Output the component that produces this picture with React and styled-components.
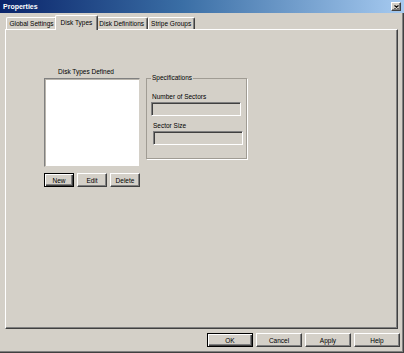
import React from 'react';
import styled, { createGlobalStyle } from 'styled-components';

const GlobalStyle = createGlobalStyle`
  html, body {
    margin: 0;
    padding: 0;
    background: #d4d0c8;
  }

  body {
    font-family: "Liberation Sans", Arial, sans-serif;
    font-size: 6.5px;
    color: #000;
  }
`;

const Window = styled.div`
  width: 404px;
  height: 353px;
  display: flex;
  flex-direction: column;
  background: #d4d0c8;
  overflow: hidden;
`;

const TitleBar = styled.div`
  flex: none;
  height: 13px;
  display: flex;
  align-items: center;
  justify-content: space-between;
  padding: 0 3px 0 3px;
  background: linear-gradient(to right, #0a246a 0%, #3a6ea5 45%, #a6caf0 100%);
  color: #fff;
  font-weight: bold;
  font-size: 7px;
`;

const CloseButton = styled.div`
  width: 10px;
  height: 9px;
  box-sizing: border-box;
  display: flex;
  align-items: center;
  justify-content: center;
  background: #d4d0c8;
  border: 1px solid;
  border-color: #fff #404040 #404040 #fff;
  box-shadow: inset -1px -1px #808080;

  svg {
    width: 5px;
    height: 4px;
  }
`;

const Body = styled.div`
  flex: 1;
  display: flex;
  flex-direction: column;
  padding: 2px 3px 5px 5px;
  border-right: 1px solid #404040;
  border-bottom: 1px solid #404040;
  box-shadow: inset -1px -1px #808080;
`;

const TabStrip = styled.div`
  flex: none;
  height: 14px;
  display: flex;
  align-items: flex-end;
  padding-left: 1px;
  position: relative;
  z-index: 1;
`;

const Tab = styled.div`
  box-sizing: border-box;
  height: ${p => (p.$active ? '15px' : '12px')};
  margin: ${p => (p.$active ? '0 -2px -1px' : '0')};
  padding: ${p => (p.$active ? '2px 4.5px 0' : '1px 2.5px 0')};
  display: flex;
  align-items: flex-start;
  white-space: nowrap;
  line-height: 9px;
  background: #d4d0c8;
  border-top: 1px solid #fff;
  border-left: 1px solid #fff;
  border-right: 1px solid #404040;
  border-radius: 2px 2px 0 0;
  box-shadow: inset -1px 0 #808080;
  position: relative;
  z-index: ${p => (p.$active ? 2 : 1)};
`;

const Panel = styled.div`
  flex: 1;
  margin-right: 2px;
  box-sizing: border-box;
  padding: 38px 0 0 38px;
  border: 1px solid;
  border-color: #fff #404040 #404040 #fff;
  box-shadow: inset -1px -1px #808080;
`;

const Content = styled.div`
  display: grid;
  grid-template-columns: 96px 101px;
  column-gap: 6px;
  align-items: start;
`;

const ListLabel = styled.div`
  grid-column: 1;
  line-height: 8px;
  padding-right: 12px;
  margin-bottom: 2px;
  text-align: center;
`;

const ListBox = styled.div`
  grid-column: 1;
  grid-row: 2;
  height: 89px;
  box-sizing: border-box;
  background: #fff;
  border: 1px solid;
  border-color: #808080 #d4d0c8 #d4d0c8 #808080;
  box-shadow: inset 1px 1px #b8b4ac;
`;

const ListButtons = styled.div`
  grid-column: 1;
  grid-row: 3;
  display: flex;
  gap: 3px;
  margin-top: 6px;
`;

const Button = styled.button`
  width: ${p => p.$width}px;
  height: 14px;
  box-sizing: border-box;
  padding: 0;
  font-family: inherit;
  font-size: 6.5px;
  color: #000;
  background: #d4d0c8;
  border: 1px solid;
  border-color: ${p => (p.$default ? '#000' : '#fff #404040 #404040 #fff')};
  box-shadow: ${p =>
    p.$default
      ? 'inset 1px 1px #fff, inset -1px -1px #404040, inset -2px -2px #808080'
      : 'inset -1px -1px #808080'};
`;

const GroupBox = styled.fieldset`
  grid-column: 2;
  grid-row: 2;
  width: 101px;
  min-width: 0;
  margin: -4px 0 0;
  padding: 0 3px 13px 4px;
  box-sizing: border-box;
  border: 1px solid #a09c94;
  box-shadow: 1px 1px #fff;
`;

const Legend = styled.legend`
  padding: 0 1px;
  margin-left: 0;
  line-height: 8px;
`;

const FieldLabel = styled.div`
  line-height: 8px;
  margin-top: ${p => p.$gap}px;
  padding-left: ${p => p.$indent}px;
`;

const Field = styled.div`
  width: 90px;
  height: 14px;
  box-sizing: border-box;
  margin-top: 1px;
  margin-left: ${p => p.$indent}px;
  background: #d4d0c8;
  border: 1px solid;
  border-color: #808080 #fff #fff #808080;
  box-shadow: inset 1px 1px #404040;
`;

const DialogButtons = styled.div`
  flex: none;
  display: flex;
  justify-content: flex-end;
  gap: 3px;
  margin-top: 4px;
`;

const App = () => (
  <Window>
    <GlobalStyle />
    <TitleBar>
      <span>Properties</span>
      <CloseButton>
        <svg viewBox="0 0 5 4">
          <path d="M0.5 0.5 L4.5 3.5 M4.5 0.5 L0.5 3.5" stroke="#000" strokeWidth="1.1" />
        </svg>
      </CloseButton>
    </TitleBar>
    <Body>
      <TabStrip>
        <Tab>Global Settings</Tab>
        <Tab $active>Disk Types</Tab>
        <Tab>Disk Definitions</Tab>
        <Tab>Stripe Groups</Tab>
      </TabStrip>
      <Panel>
        <Content>
          <ListLabel>Disk Types Defined</ListLabel>
          <ListBox />
          <GroupBox>
            <Legend>Specifications</Legend>
            <FieldLabel $gap={11} $indent={1}>Number of Sectors</FieldLabel>
            <Field $indent={0} />
            <FieldLabel $gap={6} $indent={2}>Sector Size</FieldLabel>
            <Field $indent={2} />
          </GroupBox>
          <ListButtons>
            <Button $width={30} $default>New</Button>
            <Button $width={30}>Edit</Button>
            <Button $width={30}>Delete</Button>
          </ListButtons>
        </Content>
      </Panel>
      <DialogButtons>
        <Button $width={46} $default>OK</Button>
        <Button $width={46}>Cancel</Button>
        <Button $width={46}>Apply</Button>
        <Button $width={46}>Help</Button>
      </DialogButtons>
    </Body>
  </Window>
);

export default App;
